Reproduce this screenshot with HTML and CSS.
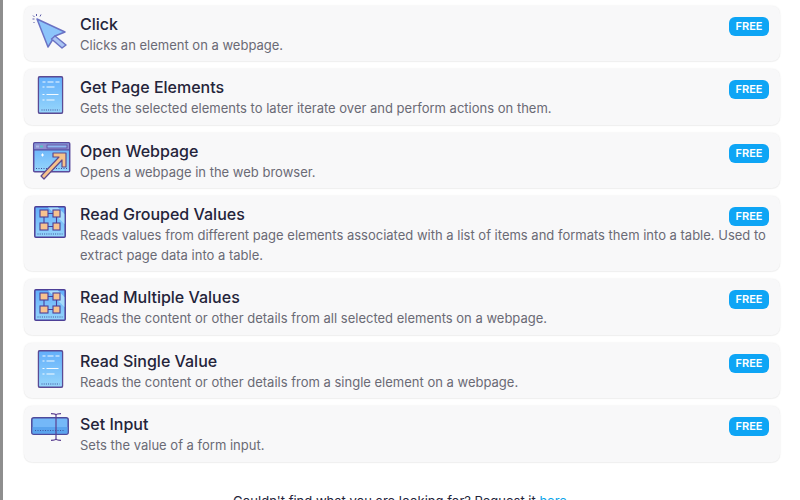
FILE: index.html
```html
<!DOCTYPE html>
<html lang="en">
<head>
<meta charset="utf-8">
<title>Blocks</title>
<link rel="stylesheet" href="styles.css">
</head>
<body>
<svg class="defs" width="0" height="0" aria-hidden="true">
  <defs>
    <linearGradient id="blue" x1="0" y1="0" x2="0" y2="1">
      <stop offset="0" stop-color="#62aefb"/>
      <stop offset="1" stop-color="#96d6fb"/>
    </linearGradient>
    <symbol id="doc" viewBox="0 0 26 38">
      <rect x=".8" y=".8" width="24.400" height="36.400" rx="1.500" fill="url(#blue)" stroke="#5b4a94" stroke-width="1.500"/>
      <path d="M4 34h18" stroke="#3f4f9a" stroke-width="1" stroke-dasharray="1 1.200"/>
      <path d="M5 6h3M10 6h6M18 6h4M5 11h2M9 11h8M5 18.500h2M9 18.500h12M5 24h2M9 24h8" stroke="#f2faff" stroke-width="1.100"/>
    </symbol>
    <symbol id="grid" viewBox="0 0 32 32">
      <rect x=".8" y=".8" width="30.400" height="30.400" rx="1" fill="url(#blue)" stroke="#4d3f97" stroke-width="1.500"/>
      <path d="M14 1.600L30.400 18V8L24 1.600z" fill="#a8dcfb"/>
      <path d="M3.500 28h25" stroke="#3f4f9a" stroke-width="1" stroke-dasharray="1 1.200"/>
      <path d="M14 7.500h5M10 11v6M22.500 11v6M14 20.500h5" stroke="#4d3f97" stroke-width="1.100" fill="none"/>
      <g fill="#f7c28f" stroke="#4d3f97" stroke-width="1.100">
        <rect x="6" y="4" width="8" height="7"/>
        <rect x="19" y="4" width="7" height="7"/>
        <rect x="6" y="17" width="8" height="7"/>
        <rect x="19" y="17" width="7" height="7"/>
      </g>
    </symbol>
  </defs>
</svg>
<div class="page">
  <main class="list">
    <article class="card">
      <svg class="icon" viewBox="0 0 40 40" aria-hidden="true">
        <path d="M6 6L34 19L24 23L17 34z" fill="#8cc4fa" stroke="#6a72c4" stroke-width="1.500" stroke-linejoin="round"/>
        <path d="M24 23L35 32L31 35L20.500 26z" fill="#a9c4f4" stroke="#6a72c4" stroke-width="1.500" stroke-linejoin="round"/>
        <path d="M5.500 1v2M10 1.500l-1 2M1.500 6h2M2 2.500l1.500 1.500M2.500 10l1-1" stroke="#5d5ca8" stroke-width="1" fill="none"/>
      </svg>
      <div class="body">
        <h3 class="title">Click</h3>
        <p class="desc">Clicks an element on a webpage.</p>
      </div>
      <span class="badge">FREE</span>
    </article>
    <article class="card">
      <svg class="icon" aria-hidden="true"><use href="#doc" x="6.500" y="0" width="26" height="38"/></svg>
      <div class="body">
        <h3 class="title">Get Page Elements</h3>
        <p class="desc">Gets the selected elements to later iterate over and perform actions on them.</p>
      </div>
      <span class="badge">FREE</span>
    </article>
    <article class="card">
      <svg class="icon" viewBox="0 0 40 40" aria-hidden="true">
        <rect x="2.700" y="2.700" width="36" height="29" rx="1" fill="url(#blue)" stroke="#5a4a9c" stroke-width="1.500"/>
        <rect x="3.500" y="3.500" width="34.500" height="6" fill="#8f90d0"/>
        <path d="M2.700 9.800h36" stroke="#5a4a9c" stroke-width="1.200"/>
        <rect x="5" y="5.500" width="3" height="2" fill="#a8b8e8"/>
        <rect x="9" y="5.500" width="3" height="2" fill="#52c2c8"/>
        <rect x="16" y="5" width="20" height="3" fill="#8fb8f0" stroke="#5a4a9c" stroke-width=".8"/>
        <path d="M5 28.500h32" stroke="#3f4f9a" stroke-width="1" stroke-dasharray="1 1.500"/>
        <path d="M10 15h3M11.500 13.500v3" stroke="#fff" stroke-width="1"/>
        <path d="M10 36L13 39L31 20V27H35V13H22V17H28Z" fill="#f6c28b" stroke="#5f4a8c" stroke-width="1.200" stroke-linejoin="round"/>
      </svg>
      <div class="body">
        <h3 class="title">Open Webpage</h3>
        <p class="desc">Opens a webpage in the web browser.</p>
      </div>
      <span class="badge">FREE</span>
    </article>
    <article class="card">
      <svg class="icon" aria-hidden="true"><use href="#grid" x="3" y="3" width="32" height="32"/></svg>
      <div class="body">
        <h3 class="title">Read Grouped Values</h3>
        <p class="desc">Reads values from different page elements associated with a list of items and formats them into a table. Used to extract page data into a table.</p>
      </div>
      <span class="badge">FREE</span>
    </article>
    <article class="card">
      <svg class="icon" aria-hidden="true"><use href="#grid" x="3" y="3" width="32" height="32"/></svg>
      <div class="body">
        <h3 class="title">Read Multiple Values</h3>
        <p class="desc">Reads the content or other details from all selected elements on a webpage.</p>
      </div>
      <span class="badge">FREE</span>
    </article>
    <article class="card">
      <svg class="icon" aria-hidden="true"><use href="#doc" x="6.500" y="0" width="26" height="38"/></svg>
      <div class="body">
        <h3 class="title">Read Single Value</h3>
        <p class="desc">Reads the content or other details from a single element on a webpage.</p>
      </div>
      <span class="badge">FREE</span>
    </article>
    <article class="card">
      <svg class="icon" viewBox="0 0 40 40" aria-hidden="true">
        <rect x=".8" y="4.800" width="36.400" height="16.400" rx="2" fill="#74b8f8" stroke="#4d4a9c" stroke-width="1.500"/>
        <rect x="1.600" y="14" width="34.800" height="6.500" fill="#5aa4ee"/>
        <path d="M4 17.500h30" stroke="#3f4f9a" stroke-width=".9" stroke-dasharray="1 1.500"/>
        <path d="M25 1V27M20 .7C23 .7 25 1 25 2.500C25 1 27 .7 30 .7M20 27.300C23 27.300 25 27 25 25.500C25 27 27 27.300 30 27.300" stroke="#5b3f90" stroke-width="1.200" fill="none"/>
      </svg>
      <div class="body">
        <h3 class="title">Set Input</h3>
        <p class="desc">Sets the value of a form input.</p>
      </div>
      <span class="badge">FREE</span>
    </article>
  </main>
  <p class="request">Couldn't find what you are looking for? Request it <a class="link" href="#">here</a></p>
</div>
</body>
</html>
```
FILE: styles.css
```css
* { box-sizing: border-box; }
html, body { margin: 0; height: 500px; overflow: hidden; background: #fff; }
body { position: relative; font-family: Inter, "Liberation Sans", sans-serif; color: #1a1a2e; }
body::before { content: ""; position: absolute; left: 0; top: 0; bottom: 0; width: 2.500px; background: #8e8e8e; }
.defs { position: absolute; }
.page { padding-top: 5.750px; }
.list { display: flex; flex-direction: column; gap: 8px; padding: 0 20px 0 24px; }
.card {
  position: relative;
  display: flex;
  align-items: flex-start;
  gap: 9px;
  padding: 6px 10px 6px 7px;
  background: #f8f8f9;
  border-radius: 8px;
  box-shadow: 0 0 2px rgba(0,0,0,.09), 0 1px 1px rgba(0,0,0,.04);
}
.icon { flex: none; width: 40px; height: 40px; margin-top: 1px; }
.body { flex: 1; min-width: 0; }
.title { margin: 0; font-size: 16px; font-weight: 500; line-height: 24px; color: #24243a; }
.desc { margin: 0; font-size: 13px; line-height: 19.500px; color: #6a6a75; }
.badge {
  position: absolute;
  top: 11px;
  right: 11px;
  width: 40px;
  height: 19px;
  border-radius: 6px;
  background: #0ea5f5;
  color: #fff;
  font-size: 11px;
  font-weight: 600;
  line-height: 19px;
  text-align: center;
}
.request { margin: 29px 0 0; text-align: center; font-size: 13px; line-height: 20px; color: #24243a; }
.link { color: #0ea5e9; text-decoration: none; }
```
